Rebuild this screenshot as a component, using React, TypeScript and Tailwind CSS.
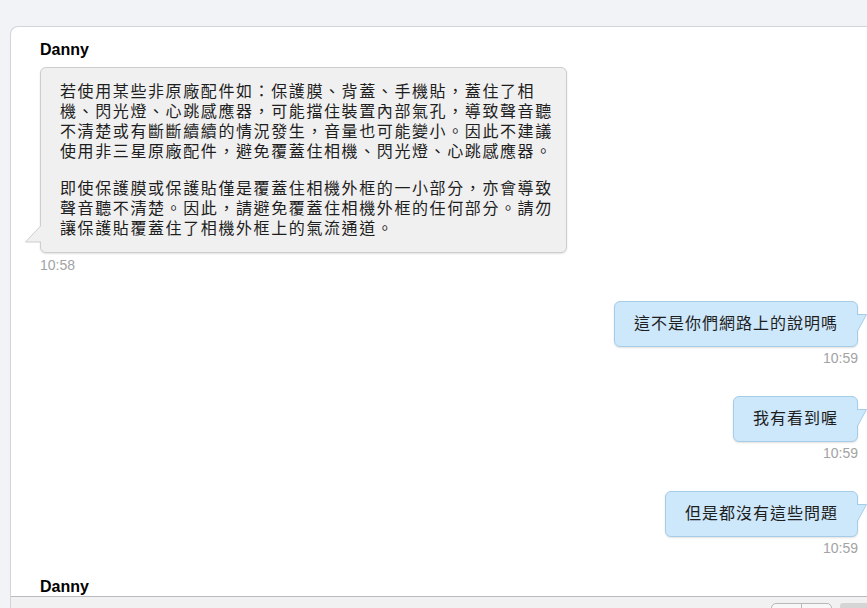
const font = { fontFamily: '"Liberation Sans", "Noto Sans CJK TC", Arial, sans-serif' }

const intro = [
  '若使用某些非原廠配件如：保護膜、背蓋、手機貼，蓋住了相',
  '機、閃光燈、心跳感應器，可能擋住裝置內部氣孔，導致聲音聽',
  '不清楚或有斷斷續續的情況發生，音量也可能變小。因此不建議',
  '使用非三星原廠配件，避免覆蓋住相機、閃光燈、心跳感應器。',
]

const outro = [
  '即使保護膜或保護貼僅是覆蓋住相機外框的一小部分，亦會導致',
  '聲音聽不清楚。因此，請避免覆蓋住相機外框的任何部分。請勿',
  '讓保護貼覆蓋住了相機外框上的氣流通道。',
]

const mine = [
  { text: '這不是你們網路上的說明嗎', time: '10:59', gap: 'mt-[26px]' },
  { text: '我有看到喔', time: '10:59', gap: 'mt-[28px]' },
  { text: '但是都沒有這些問題', time: '10:59', gap: 'mt-[28px]' },
]

function LeftTail() {
  return (
    <svg className="absolute left-[-17px] bottom-[9px]" width="18" height="18" viewBox="0 0 18 18">
      <polygon points="1.5,17 17,0.5 18,0.5 18,17" fill="#f0f0f0" />
      <polyline points="17,0.5 1.5,17 17,17" fill="none" stroke="#cdcdcd" strokeWidth="1" />
    </svg>
  )
}

function RightTail() {
  return (
    <svg className="absolute right-[-11px] top-[12px]" width="12" height="19" viewBox="0 0 12 19">
      <polygon points="0,0.5 10.5,0.5 1,18 0,18" fill="#cde7fb" />
      <polyline points="1,0.5 10.5,0.5 1,18" fill="none" stroke="#a6cde8" strokeWidth="1" />
    </svg>
  )
}

export default function App() {
  return (
    <div className="h-[608px] w-full overflow-hidden bg-[#f2f3f7] pt-[26px] pl-[10px] text-[#1e1e1e]" style={font}>
      <div className="flex h-[582px] flex-col overflow-hidden rounded-tl-[8px] border-l border-t border-[#d2d4d8] bg-white">
        <div className="h-[569px] shrink-0 overflow-hidden pl-[29px] pr-[9px] pt-[13px]">
          <div className="text-[16px] font-bold leading-[20px] text-black">Danny</div>
          <div className="relative mt-[7px] w-[527px] rounded-[6px] border border-[#cdcdcd] bg-[#f0f0f0] pl-[19px] pt-[14px] pb-[13px] text-[16px] leading-[20px] tracking-[1.6px] shadow-[0_1px_2px_rgba(0,0,0,0.12)] whitespace-nowrap">
            <p>
              {intro.map((l) => (
                <span key={l} className="block">{l}</span>
              ))}
            </p>
            <p className="mt-[17px]">
              {outro.map((l) => (
                <span key={l} className="block">{l}</span>
              ))}
            </p>
            <LeftTail />
          </div>
          <div className="mt-[2px] text-[14px] leading-[20px] text-[#a3a3a3]">10:58</div>

          {mine.map((m) => (
            <div key={m.text} className={`${m.gap} flex flex-col items-end`}>
              <div className="relative rounded-[6px] border border-[#a6cde8] bg-[#cde7fb] px-[19px] py-[12px] text-[16px] leading-[20px] tracking-[1px] shadow-[0_1px_2px_rgba(0,0,0,0.12)] whitespace-nowrap">
                {m.text}
                <RightTail />
              </div>
              <div className="mt-[1px] text-[14px] leading-[20px] text-[#a3a3a3]">{m.time}</div>
            </div>
          ))}

          <div className="mt-[19px] text-[16px] font-bold leading-[20px] text-black">Danny</div>
        </div>
        <div className="flex flex-1 items-start justify-end gap-[8px] border-t border-[#b9bbbe] bg-[#f1f1f1] pt-[6px]">
          <div className="flex h-[20px] w-[61px] rounded-t-[5px] border border-[#b8b8b8] bg-[#f7f7f7]">
            <div className="w-[30px] border-r border-[#b8b8b8]" />
            <div className="flex-1" />
          </div>
          <div className="h-[20px] w-[27px] rounded-tl-[3px] bg-[#d5d5d5]" />
        </div>
      </div>
    </div>
  )
}
